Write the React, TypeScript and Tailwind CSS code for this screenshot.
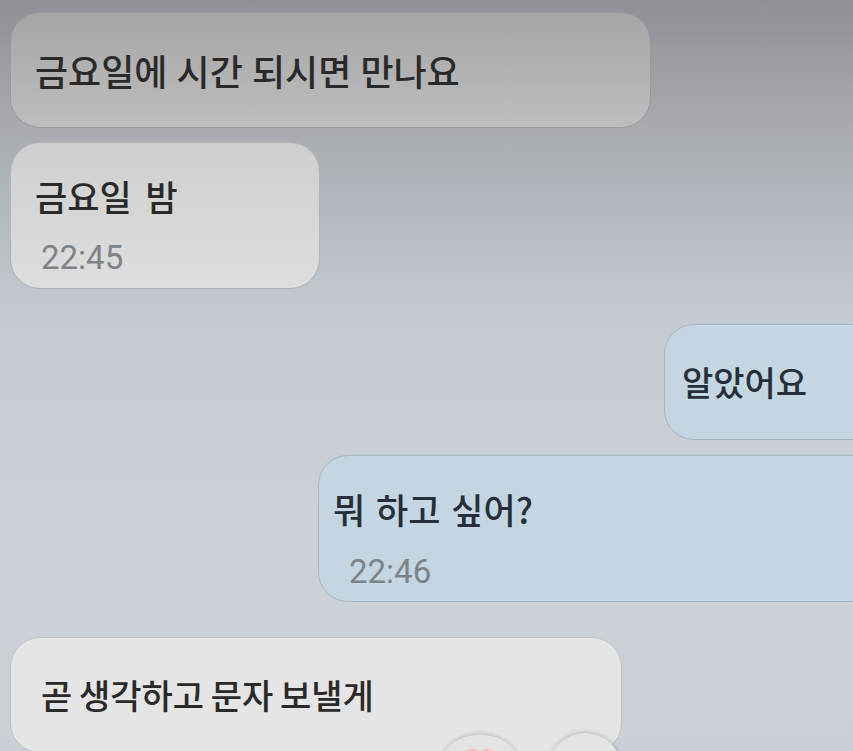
import React from "react";

const ko = "font-['Noto_Sans_CJK_KR','Noto_Sans',sans-serif]";
const num = "font-['Roboto','Liberation_Sans',sans-serif]";

function TextLine({
  children,
  dark,
  className = "",
}: {
  children: React.ReactNode;
  dark?: boolean;
  className?: string;
}) {
  return (
    <div
      className={`${ko} leading-[40px] font-medium whitespace-nowrap ${className} ${
        dark ? "text-[#27303a]" : "text-[#2a2a2a]"
      }`}
    >
      {children}
    </div>
  );
}

function Time({ children }: { children: React.ReactNode }) {
  return <div className={`${num} text-[33px] leading-[40px] text-[#7e8388]`}>{children}</div>;
}

export default function App() {
  return (
    <div className="w-[853px] h-[751px] overflow-hidden bg-[linear-gradient(180deg,#8e9095_0%,#a9adb2_18%,#c5cad1_42%,#cdd2d9_70%,#cbd0d7_100%)]">
      <div className="flex flex-col pt-[12px]">
        {/* incoming */}
        <div className="ml-[10px] w-[641px] h-[116px] rounded-[30px] border border-[#999a9b] bg-[linear-gradient(180deg,#a5a5a5,#bebebe)] flex items-center pl-[24px]">
          <TextLine className="text-[36px] [word-spacing:1px]">금요일에 시간 되시면 만나요</TextLine>
        </div>

        <div className="mt-[14px] ml-[10px] w-[310px] h-[147px] rounded-[30px] border border-[#b3b3b3] bg-[linear-gradient(180deg,#cfcfcf,#dedede)] flex flex-col pl-[24px] pt-[33px]">
          <TextLine className="text-[35px] [word-spacing:6px]">금요일 밤</TextLine>
          <div className="mt-[22px] pl-[6px]">
            <Time>22:45</Time>
          </div>
        </div>

        {/* outgoing */}
        <div className="mt-[35px] self-end -mr-[40px] w-[229px] h-[116px] rounded-[30px] border border-[#a7b6c0] bg-[#c4d6e1] flex items-center pl-[17px]">
          <TextLine dark className="text-[34px]">
            알았어요
          </TextLine>
        </div>

        <div className="mt-[15px] self-end -mr-[40px] w-[575px] h-[147px] rounded-[30px] border border-[#a7b6c0] bg-[#c4d6e1] flex flex-col pl-[14px] pt-[33px]">
          <TextLine dark className="text-[35px] [word-spacing:3px]">
            뭐 하고 싶어?
          </TextLine>
          <div className="mt-[23px] pl-[16px]">
            <Time>22:46</Time>
          </div>
        </div>

        {/* incoming with reactions */}
        <div className="relative mt-[35px] ml-[10px] w-[612px] h-[116px] rounded-[30px] border border-[#c2c2c2] bg-[#e5e5e5] flex items-center pl-[30px]">
          <TextLine className="text-[34px] [word-spacing:-1px]">곧 생각하고 문자 보낼게</TextLine>
          <div className="absolute left-[426px] top-[97px] w-[86px] h-[80px] rounded-full bg-[#e4e4e4] shadow-[0_-1px_4px_rgba(0,0,0,0.18)] flex justify-center pt-[12px]">
            <svg width="34" height="30" viewBox="0 0 34 30">
              <path
                d="M17 28 C6 20 2 14 2 9 C2 4.5 5.5 1.5 9.5 1.5 C13 1.5 15.5 3.5 17 6 C18.5 3.5 21 1.5 24.5 1.5 C28.5 1.5 32 4.5 32 9 C32 14 28 20 17 28 Z"
                fill="#f6c3c3"
              />
            </svg>
          </div>
          <div className="absolute left-[537px] top-[95px] w-[74px] h-[74px] rounded-full bg-[#e4e4e4] shadow-[0_-1px_4px_rgba(0,0,0,0.18)]" />
        </div>
      </div>
    </div>
  );
}
